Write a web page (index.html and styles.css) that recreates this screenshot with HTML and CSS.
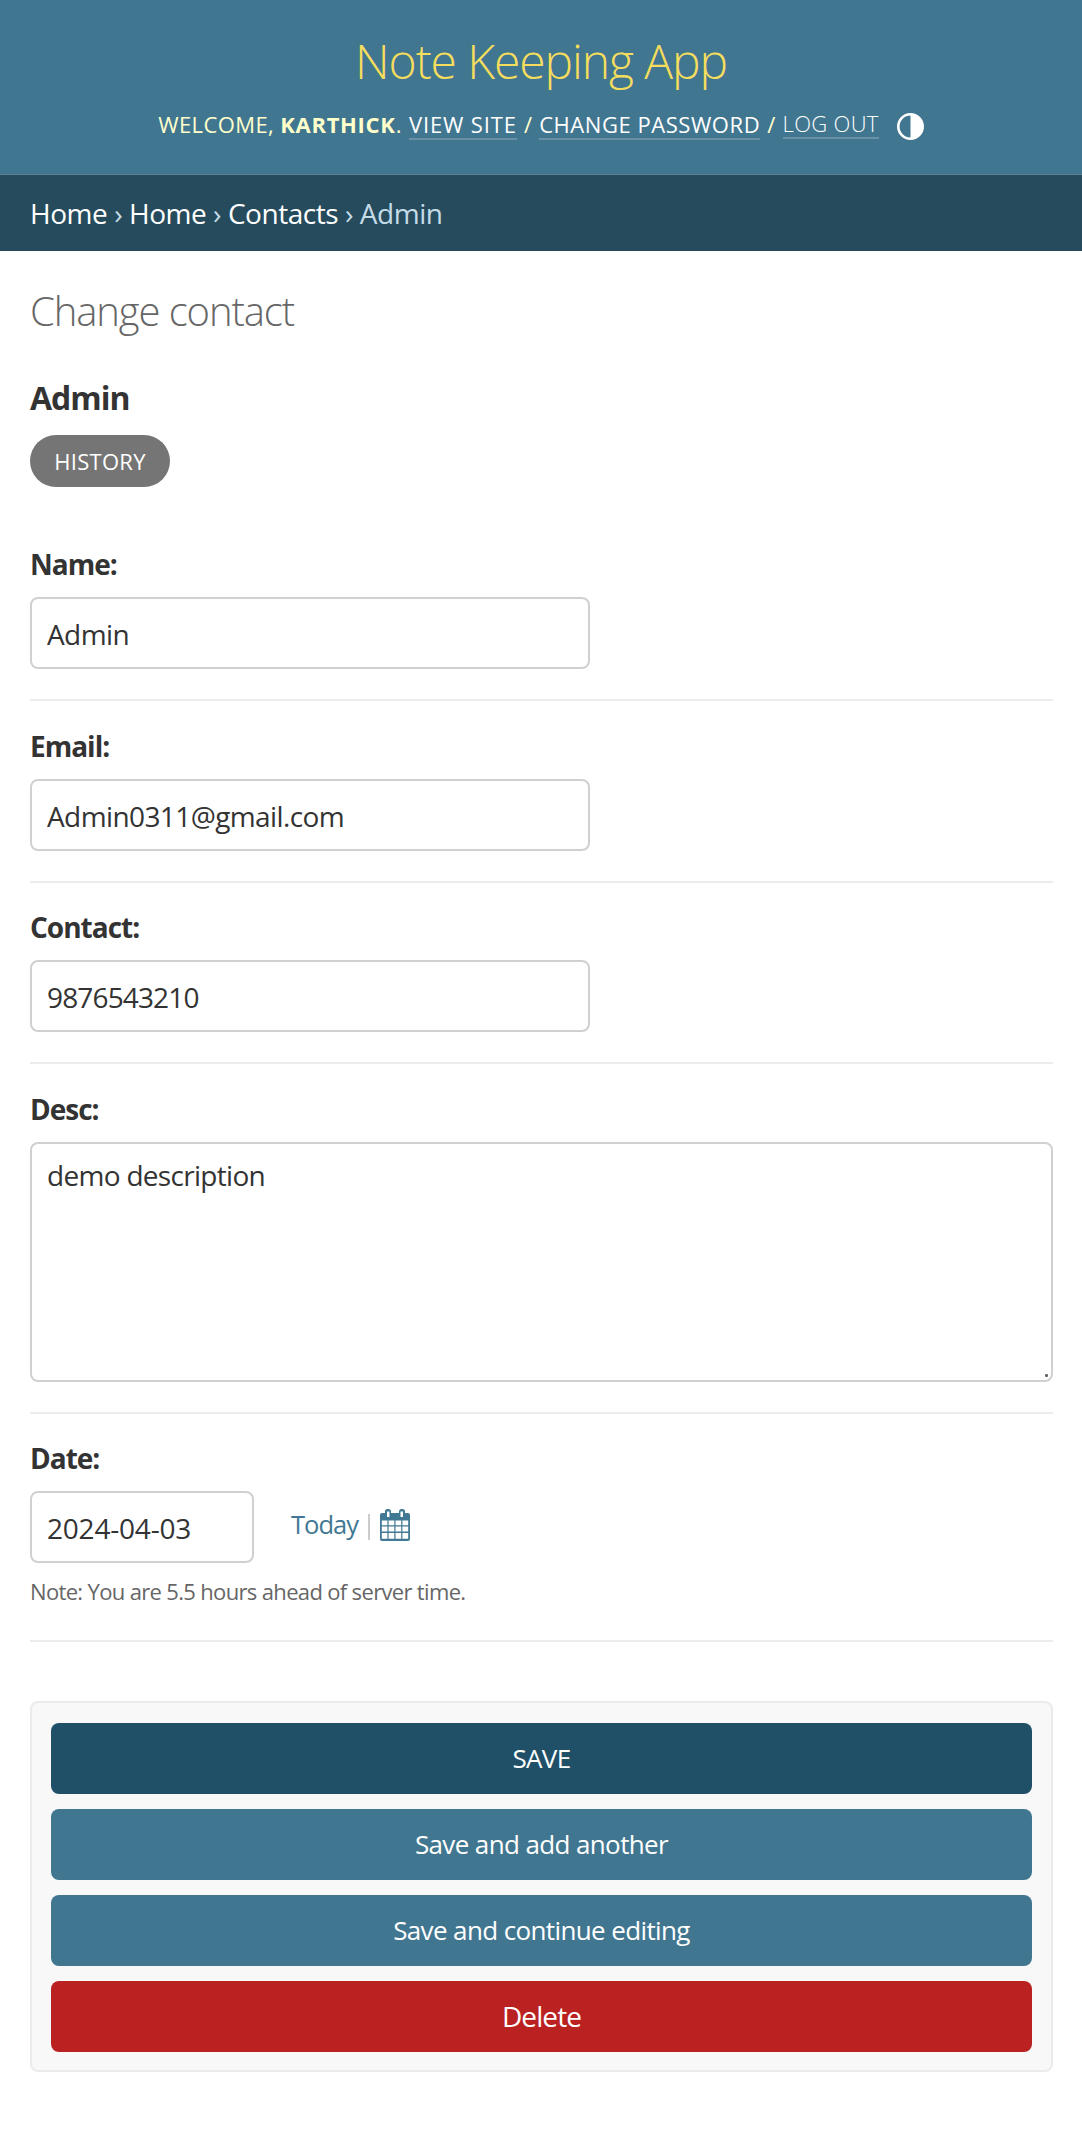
FILE: index.html
```html
<!DOCTYPE html>
<html lang="en">
<head>
<meta charset="utf-8">
<title>Change contact | Note Keeping App</title>
<link rel="stylesheet" href="styles.css">
</head>
<body>
<header class="header">
  <h1 class="brand">Note Keeping App</h1>
  <div class="user-tools">
    <span class="welcome">Welcome, <strong>Karthick</strong>.</span>
    <a class="view-site" href="#">View site</a> <span>/</span>
    <a class="change-password" href="#">Change password</a> <span>/</span>
    <button class="logout">Log out</button>
    <svg class="theme-icon" viewBox="0 0 27 27" aria-hidden="true"><circle cx="13.5" cy="13.5" r="12.2" fill="none" stroke="#fff" stroke-width="2.6"/><path d="M13.500 1.500a12 12 0 0 1 0 24z" fill="#fff"/></svg>
  </div>
</header>
<nav class="breadcrumbs"><a href="#">Home</a> › <a href="#">Home</a> › <a href="#">Contacts</a> › <span>Admin</span></nav>
<main class="content">
  <h2 class="page-title">Change contact</h2>
  <h3 class="object-name">Admin</h3>
  <a class="history" href="#">History</a>
  <form class="form">
    <div class="row"><label for="name">Name:</label><input id="name" class="field" value="Admin"></div>
    <div class="row"><label for="email">Email:</label><input id="email" class="field" value="Admin0311@gmail.com"></div>
    <div class="row"><label for="contact">Contact:</label><input id="contact" class="field number" value="9876543210"></div>
    <div class="row"><label for="desc">Desc:</label>
      <div class="area-wrap"><textarea id="desc" class="field area">demo description</textarea><i class="grip"></i></div>
    </div>
    <div class="row row-date"><label for="date">Date:</label>
      <div class="date-line">
        <input id="date" class="field date" value="2024-04-03">
        <a class="today" href="#">Today</a><span class="sep"></span>
        <svg class="calendar" viewBox="0 0 30 32" aria-hidden="true">
          <path fill="#417893" fill-rule="evenodd" d="M2 4h3V2.500a2.500 2.500 0 0 1 2.500-2.500h1A2.500 2.500 0 0 1 11 2.500V4h8V2.500A2.500 2.500 0 0 1 21.500 0h1A2.500 2.500 0 0 1 25 2.500V4h3a2 2 0 0 1 2 2v24a2 2 0 0 1-2 2H2a2 2 0 0 1-2-2V6a2 2 0 0 1 2-2zM7 2.500v5.500h2.500V2.500zM20.500 2.500v5.500H23V2.500zM1.800 11.500v4.800h5.600v-4.800zM8.600 11.500v4.800h5.700v-4.800zM15.500 11.500v4.800h5.700v-4.800zM22.400 11.500v4.800h5.800v-4.800zM1.800 17.500v5h5.600v-5zM8.600 17.500v5h5.700v-5zM15.500 17.500v5h5.700v-5zM22.400 17.500v5h5.800v-5zM1.800 24v5.800h5.600V24zM8.600 24v5.800h5.700V24zM15.500 24v5.800h5.700V24zM22.400 24v5.800h5.800V24z"/>
        </svg>
      </div>
      <p class="help">Note: You are 5.5 hours ahead of server time.</p>
    </div>
    <div class="submit-row">
      <button type="button" class="btn btn-save">SAVE</button>
      <button type="button" class="btn">Save and add another</button>
      <button type="button" class="btn">Save and continue editing</button>
      <button type="button" class="btn btn-delete">Delete</button>
    </div>
  </form>
</main>
</body>
</html>
```
FILE: styles.css
```css
* { box-sizing: border-box; }
body { margin: 0; background: #fff; color: #333; font: 28px/36px "Open Sans", "Noto Sans", sans-serif; }
a { color: inherit; text-decoration: none; }
h1, h2, h3, p { margin: 0; font-weight: 400; }

.header { height: 175px; padding-top: 31px; background: #417690; border-bottom: 1px solid #5b7f90; color: #ffc; text-align: center; }
.brand { color: #f5dd5d; font-size: 48px; font-weight: 300; line-height: 60px; letter-spacing: -1.1px; }
.user-tools { display: flex; justify-content: center; margin-top: 13px; font-size: 22px; line-height: 40px; text-transform: uppercase; gap: 7.2px; }
.user-tools a, .logout { height: 36px; color: #fff; border-bottom: 2px solid #6991a6; }
.welcome { letter-spacing: .4px; }
.welcome strong { letter-spacing: .7px; }
.view-site { letter-spacing: .85px; }
.change-password { letter-spacing: .55px; }
.user-tools .logout { height: 35px; padding: 0; background: none; border-width: 0 0 2px; font: inherit; font-weight: 300; line-height: 39px; letter-spacing: .3px; text-transform: inherit; }
.theme-icon { width: 27px; height: 27px; margin: 9px 0 0 11px; }

.breadcrumbs { height: 76px; padding: 0 30px; background: #264b5d; color: #c4dce8; line-height: 76px; letter-spacing: -.45px; }
.breadcrumbs a { color: #fff; }

.content { padding: 35px 29px 0 30px; }
.page-title { color: #666; font-size: 40px; font-weight: 300; line-height: 50px; letter-spacing: -1.1px; }
.object-name { margin-top: 42px; font-size: 32px; font-weight: 700; line-height: 40px; letter-spacing: -1px; }
.history { display: block; width: 140px; height: 52px; margin-top: 17px; border-radius: 26px; background: #757575; color: #fff; font-size: 22px; line-height: 52px; letter-spacing: .3px; text-align: center; text-transform: uppercase; }

.form { margin-top: 32.4px; }
.row { padding: 26.6px 0 30px; border-bottom: 2px solid #ececec; }
.row-date { padding-bottom: 31.5px; }
.row label { display: block; margin-bottom: 15px; font-weight: 700; line-height: 36px; letter-spacing: -1px; }
.field { display: block; width: 560px; height: 72px; padding: 2px 15px 0; border: 2px solid #d0d0d0; border-radius: 8px; background: #fff; color: #333; font: inherit; letter-spacing: -.6px; outline: 0; }
.number { letter-spacing: -.85px; }
.area-wrap { position: relative; }
.area { width: 100%; height: 240px; padding: 13px 15px; letter-spacing: -.7px; resize: none; }
.grip { position: absolute; right: 5px; bottom: 5px; width: 3px; height: 3px; border-radius: 1px; background: #666; }
.date-line { display: flex; }
.date { width: 224px; letter-spacing: -.2px; }
.today { margin-left: 37px; color: #417893; font-size: 25.5px; line-height: 66px; letter-spacing: -1px; }
.sep { width: 2px; height: 26px; margin: 23px 10px 0 10.5px; background: #ccc; }
.calendar { width: 30px; height: 32px; margin-top: 18px; }
.help { margin-top: 11px; color: #666; font-size: 22px; line-height: 34px; letter-spacing: -.66px; }

.submit-row { display: flex; flex-direction: column; gap: 15px; height: 371px; margin-top: 59px; padding: 20px 19px; border: 2px solid #ebebeb; border-radius: 8px; background: #f8f8f8; }
.btn { flex: 0 0 71px; padding: 0; border: 0; border-radius: 8px; background: #417690; color: #fff; font: 26px/71px "Open Sans", sans-serif; letter-spacing: -.62px; }
.btn-save { background: #205067; }
.btn-delete { background: #ba2121; font-size: 28px; letter-spacing: -.9px; }
```
